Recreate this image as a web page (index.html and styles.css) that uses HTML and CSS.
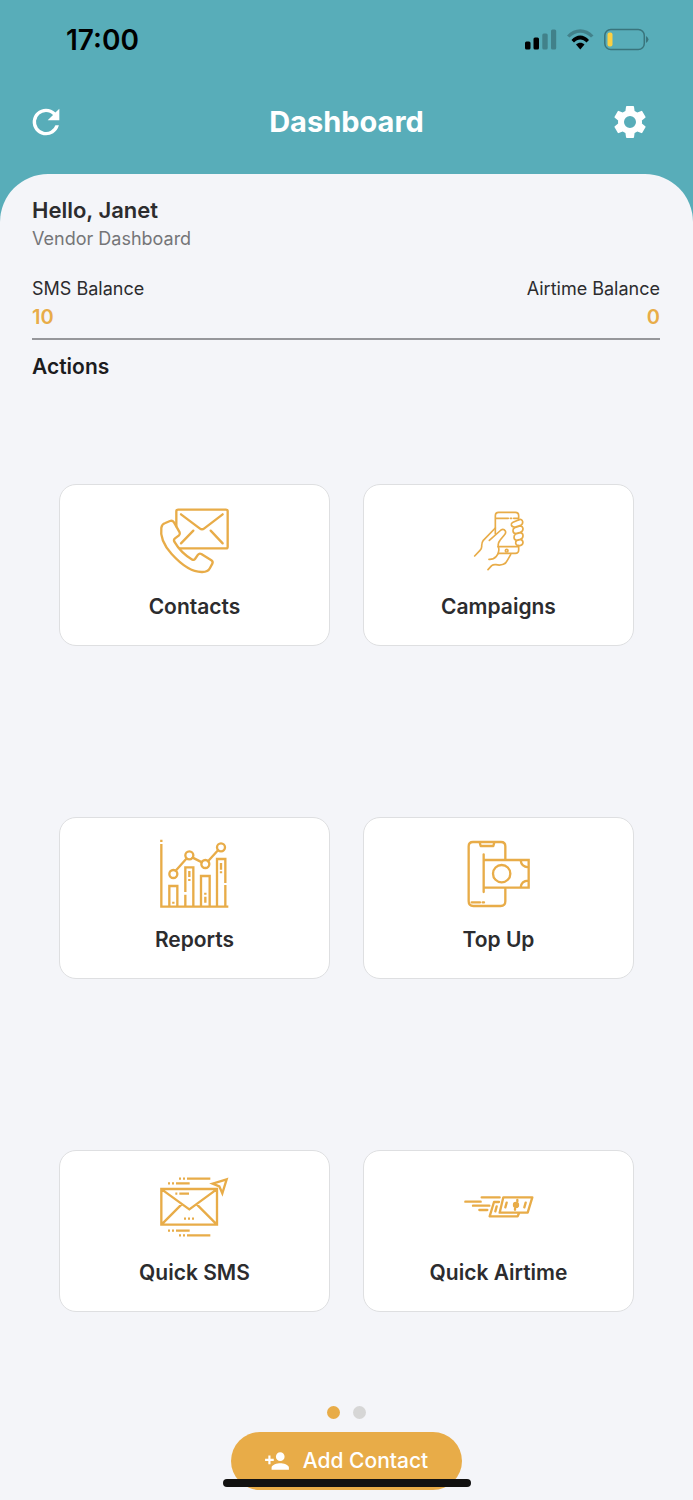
FILE: index.html
```html
<!DOCTYPE html>
<html lang="en">
<head>
<meta charset="utf-8">
<meta name="viewport" content="width=device-width, initial-scale=1">
<title>Dashboard</title>
<link rel="stylesheet" href="styles.css">
</head>
<body>
<div class="app">
  <header class="header">
    <div class="status">
      <span class="time">17:00</span>
      <svg class="status-icons" viewBox="0 0 126 24" width="126" height="24" aria-hidden="true">
        <rect x="1" y="13.500" width="5.500" height="8" rx="1.500"/>
        <rect x="9.500" y="9.500" width="5.500" height="12" rx="1.500"/>
        <g class="dim"><rect x="18.300" y="5.500" width="5.400" height="16" rx="1.500"/><rect x="27" y="1.500" width="5.200" height="20" rx="1.500"/></g>
        <path class="dim" d="M43 7.500C50.500-1 62-1 69.500 7.500L67 9.500C60.500 3 52 3 45.500 9.500Z"/>
        <path d="M47.500 12C52.500 6 60 6 65 12L62.500 14.500C58.800 10.500 53.700 10.500 50 14.500Z"/>
        <path d="M52 16.500C54.500 14 58 14 60.500 16.500L56.300 21.500Z"/>
        <rect class="battery" x="80.800" y="1.500" width="39.500" height="20" rx="6"/>
        <path class="cap" d="M122 8q5 3.500 0 7z"/>
        <rect class="charge" x="83.500" y="4.500" width="5" height="14" rx="2"/>
      </svg>
    </div>
    <nav class="nav">
      <button class="icon-button" type="button" aria-label="Refresh">
        <svg viewBox="0 0 24 24" width="40" height="40"><path d="M17.650 6.350A7.960 7.960 0 0 0 12 4a8 8 0 1 0 7.730 10h-2.080A6 6 0 1 1 12 6c1.660 0 3.140.69 4.220 1.780L13 11h7V4z"/></svg>
      </button>
      <h1 class="title">Dashboard</h1>
      <button class="icon-button icon-end" type="button" aria-label="Settings">
        <svg viewBox="0 0 24 24" width="40" height="40"><path d="M19.140 12.940c.04-.3.060-.61.060-.94s-.02-.64-.07-.94l2.030-1.580a.49.490 0 0 0 .12-.61l-1.920-3.320a.49.490 0 0 0-.59-.22l-2.390.96a7 7 0 0 0-1.620-.94l-.36-2.540a.48.480 0 0 0-.48-.41h-3.840a.48.480 0 0 0-.47.410l-.36 2.540a7.200 7.200 0 0 0-1.620.94l-2.390-.96a.48.480 0 0 0-.59.220L2.740 8.870a.47.470 0 0 0 .12.610l2.030 1.580a6 6 0 0 0 0 1.880l-2.030 1.580a.49.490 0 0 0-.12.610l1.920 3.320c.12.220.37.290.59.220l2.390-.96c.5.380 1.030.7 1.620.94l.36 2.540c.05.240.24.410.48.410h3.840c.24 0 .44-.17.470-.41l.36-2.540a7 7 0 0 0 1.620-.94l2.390.96c.22.080.47 0 .59-.22l1.920-3.320a.47.470 0 0 0-.12-.61zM12 15.600a3.600 3.600 0 1 1 0-7.200 3.600 3.600 0 0 1 0 7.200z"/></svg>
      </button>
    </nav>
  </header>
  <main class="panel">
    <section class="intro">
      <h2 class="greeting">Hello, Janet</h2>
      <p class="role">Vendor Dashboard</p>
      <div class="balances">
        <div class="balance"><span class="balance-label">SMS Balance</span><strong class="balance-value">10</strong></div>
        <div class="balance balance-end"><span class="balance-label">Airtime Balance</span><strong class="balance-value">0</strong></div>
      </div>
      <h2 class="section-title">Actions</h2>
    </section>
    <section class="actions">
      <button class="card" type="button">
        <svg class="art" viewBox="0 0 270 255" width="90" height="85" aria-hidden="true">
          <path d="M79 79V34q0-5 5-5h144q5 0 5 5v106q0 5-5 5H89"/>
          <path d="M93 43l56 42q7 6 14 0l55-42M130 92l-37 38M182 92l36 38"/>
          <path d="M60 63Q67 60 72 67L89 97Q91 102 87 106L75 115Q70 119 73 125C84 144 106 167 127 179Q132 181 135 177L144 164Q148 159 154 162L184 181Q190 185 187 191L180 204Q174 216 157 216C127 217 94 194 65 162C43 138 30 110 34 83Q36 72 46 69Z"/>
        </svg>
        <span class="card-label">Contacts</span>
      </button>
      <button class="card" type="button">
        <svg class="art thin" viewBox="-19 0 270 255" width="90" height="85" aria-hidden="true">
          <path d="M105 101V47q0-10 10-10h50q10 0 10 10v13M105 55h39M150 55h4M160 55h14M113 140h62v10q0 10-10 10h-52M175 137v7"/>
          <circle cx="139" cy="152" r="4"/>
          <path d="M43 168L59 151Q65 145 64 137Q64 128 69 121L105 84M87 121L122 90Q130 85 135 93Q138 99 132 105L119 121Q112 129 114 139Q119 158 108 169Q99 179 86 178M83 209L94 197Q99 193 107 194Q119 197 129 193Q137 190 141 181L151 164"/>
          <path d="M158 67L176 59Q185 56 187 65Q188 73 181 76L165 81Q155 82 153 75Q152 70 158 67ZM163 83L179 78Q187 78 188 86Q188 94 180 97L167 101Q158 100 158 92Q157 86 163 83ZM166 102L180 98Q188 99 188 107Q188 115 180 118L169 121Q161 120 161 112Q161 105 166 102ZM170 121L181 118Q188 120 188 128Q187 136 179 137Q168 138 166 130Q165 124 170 121Z"/>
        </svg>
        <span class="card-label">Campaigns</span>
      </button>
      <button class="card" type="button">
        <svg class="art" viewBox="0 9 270 255" width="90" height="85" aria-hidden="true">
          <path class="square" d="M34 29v7M34 42v188h201M58 230v-62h24v62M106 186v-74h24v118M106 194v36M153 230v-92h26v92M201 230V87h25v72M226 165v65M118 123v18M118 147v6M213 99v20M213 124v6M166 188v6M166 200v18M70 215v6"/>
          <circle cx="70" cy="132" r="12"/><circle cx="118" cy="76" r="12"/><circle cx="166" cy="102" r="12"/><circle cx="213" cy="52" r="12"/>
          <path d="M77 122l32-36M128 83l28 14M174 94l30-33"/>
        </svg>
        <span class="card-label">Reports</span>
      </button>
      <button class="card" type="button">
        <svg class="art" viewBox="-3 9 270 255" width="90" height="85" aria-hidden="true">
          <path d="M151 88V49q0-13-13-13H54Q41 36 41 49v165q0 14 14 14h82q14 0 14-14v-38M74 37l3 11h38l3-11M86 73v113M50 217h25M83 217h4"/>
          <path class="square" d="M87 90h134v83H87M197 91q2 19 23 21M197 172q2-19 23-20"/>
          <circle cx="140" cy="131" r="26"/>
        </svg>
        <span class="card-label">Top Up</span>
      </button>
      <button class="card" type="button">
        <svg class="art" viewBox="0 3 270 255" width="90" height="85" aria-hidden="true">
          <path class="square" d="M34 72h167v107H34zM35 73l83 60 82-60M35 178l59-59M200 178l-59-59M87 41h6M99 41h6M111 41h70M54 55h6M66 55h6M78 55h41M76 86h6M88 86h29M102 161h6M114 161h6M126 161h6M54 197h6M66 197h6M78 197h41M87 211h6M99 211h6M111 211h70"/>
          <path class="square" d="M230 43l-42 13 20 8 9 21z"/>
        </svg>
        <span class="card-label">Quick SMS</span>
      </button>
      <button class="card" type="button">
        <svg class="art" viewBox="-3 -42 270 255" width="90" height="85" aria-hidden="true">
          <path d="M145 52h87l-14 46h-84zM132 66h-15l-13 43h84l4-9M80 52h54M31 65h46M54 77h49M73 90h24M155 68l-4 14M212 68l-4 14M125 79l-4 15"/>
          <circle cx="183" cy="75" r="6"/><path d="M187 60v4M180 86v3M179 71l8 8"/>
        </svg>
        <span class="card-label">Quick Airtime</span>
      </button>
    </section>
    <div class="dots" aria-hidden="true"><span class="dot active"></span><span class="dot"></span></div>
    <footer class="footer">
      <button class="add" type="button">
        <svg viewBox="0 0 24 24" width="26" height="26" aria-hidden="true"><path d="M15 12a4 4 0 1 0 0-8 4 4 0 0 0 0 8zm-9-2V7H4v3H1v2h3v3h2v-3h3v-2zm9 4c-2.670 0-8 1.340-8 4v2h16v-2c0-2.660-5.330-4-8-4z"/></svg>
        <span>Add Contact</span>
      </button>
      <div class="home-bar"></div>
    </footer>
  </main>
</div>
</body>
</html>
```
FILE: styles.css
```css
* { box-sizing: border-box; }
body, h1, h2, p { margin: 0; }
body {
  background: #58adb9;
  color: #2c2c2e;
  font-family: Inter, "Liberation Sans", sans-serif;
}
button { border: 0; padding: 0; background: none; color: inherit; font: inherit; cursor: pointer; }
svg { display: block; }

.app { display: flex; flex-direction: column; min-height: 100vh; }

.header { color: #fff; }
.status {
  display: flex;
  justify-content: space-between;
  align-items: center;
  height: 80px;
  padding: 0 43px 0 66px;
  color: #000;
}
.time { font-size: 28px; font-weight: 600; line-height: 32px; }
.dim { opacity: 0.25; }
.battery { fill: none; stroke: #39747c; stroke-width: 1.5; }
.cap { fill: #39747c; }
.charge { fill: #fbd043; }

.nav {
  display: grid;
  grid-template-columns: 60px 1fr 60px;
  align-items: center;
  height: 94px;
  padding: 0 43px 10px 26px;
}
.title {
  grid-column: 1 / -1;
  grid-row: 1;
  margin-left: 17px;
  font-size: 29px;
  font-weight: 700;
  line-height: 36px;
  text-align: center;
}
.icon-button { grid-column: 1; grid-row: 1; justify-self: start; z-index: 1; }
.icon-end { grid-column: 3; justify-self: end; }
.icon-button svg, .add svg { fill: currentColor; }

.panel {
  display: flex;
  flex: 1;
  flex-direction: column;
  padding-bottom: 10px;
  border-radius: 48px 48px 0 0;
  background: #f4f5f9;
}
.intro { padding: 20px 33px 0 32px; }
.greeting { font-size: 22px; font-weight: 600; line-height: 32px; }
.role { color: #757578; font-size: 18px; line-height: 26px; }
.balances {
  display: flex;
  justify-content: space-between;
  margin-top: 24px;
  padding-bottom: 6px;
  border-bottom: 2px solid #96979b;
}
.balance { display: flex; flex-direction: column; }
.balance-end { align-items: flex-end; }
.balance-label { font-size: 18px; line-height: 26px; }
.balance-value { color: #e8ac48; font-size: 20px; font-weight: 600; line-height: 30px; }
.section-title { margin-top: 12px; color: #1c1c1e; font-size: 21px; font-weight: 600; line-height: 30px; }

.actions {
  display: grid;
  flex: 1;
  grid-template-columns: 1fr 1fr;
  grid-auto-rows: 1fr;
  align-items: center;
  column-gap: 33px;
  margin-top: 16px;
  padding: 0 59px;
}
.card {
  display: flex;
  flex-direction: column;
  align-items: center;
  gap: 6px;
  padding: 15px 0 22px;
  border: 1px solid #dedfe1;
  border-radius: 17px;
  background: #fff;
}
.card-label { font-size: 21px; font-weight: 600; line-height: 32px; }
.art { fill: none; stroke: #e8ac48; stroke-width: 7; stroke-linecap: round; stroke-linejoin: round; }
.thin { stroke-width: 5; }
.square { stroke-linecap: butt; stroke-linejoin: miter; }

.dots { display: flex; justify-content: center; gap: 13px; padding: 8px 0 13px; }
.dot { width: 13px; height: 13px; border-radius: 50%; background: #d6d6d6; }
.active { background: #e8ac48; }

.footer { position: relative; display: flex; justify-content: center; }
.add {
  display: flex;
  align-items: center;
  gap: 13px;
  height: 58px;
  padding: 0 34px 0 33px;
  border-radius: 29px;
  background: #e8ac48;
  color: #fff;
  font-size: 21px;
  font-weight: 500;
  line-height: 30px;
}
.home-bar {
  position: absolute;
  bottom: 3px;
  left: 50%;
  width: 248px;
  height: 8px;
  margin-left: -124px;
  border-radius: 4px;
  background: #111;
}
```
